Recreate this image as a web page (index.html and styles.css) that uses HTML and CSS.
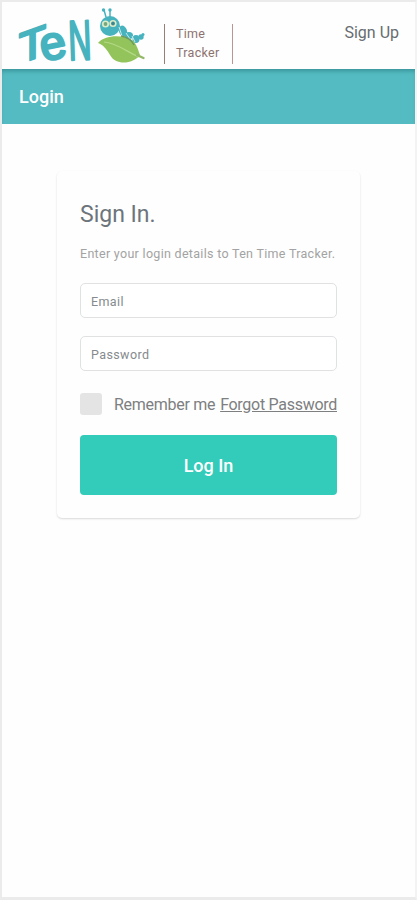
FILE: index.html
```html
<!DOCTYPE html>
<html lang="en">
<head>
    <meta charset="UTF-8">
    <meta name="viewport" content="width=device-width, initial-scale=1.0">
    <title>Login - Ten Time Tracker</title>
    <link rel="stylesheet" href="styles.css">
</head>
<body>
    <div class="page">
        <header class="header">
            <svg class="logo" width="130" height="60" viewBox="0 0 130 60" role="img" aria-label="Ten">
                <g class="logo-text">
                    <text transform="translate(0 53) skewY(-20)" font-size="43" textLength="27" lengthAdjust="spacingAndGlyphs" y="5">T</text>
                    <text transform="translate(24 55.500) rotate(-12)" font-size="47" textLength="26" lengthAdjust="spacingAndGlyphs">e</text>
                    <text transform="translate(50 54) rotate(-2)" font-size="56" textLength="23" lengthAdjust="spacingAndGlyphs">N</text>
                </g>
                <!-- caterpillar -->
                <g fill="#46b3bf">
                    <path d="M87 11 L85 4 M91 11 L91 4" stroke="#46b3bf" stroke-width="1.5" fill="none"/>
                    <circle cx="84.500" cy="4" r="1.700"/>
                    <circle cx="91" cy="4" r="1.700"/>
                    <circle cx="91" cy="20" r="10"/>
                    <ellipse cx="104" cy="25" rx="4" ry="5.500" transform="rotate(-18 104 25)"/>
                    <ellipse cx="110" cy="29.500" rx="4" ry="3.500"/>
                    <ellipse cx="117" cy="33" rx="3.500" ry="4"/>
                    <circle cx="122" cy="31" r="2.700"/>
                    <circle cx="124" cy="28.500" r="1.500"/>
                </g>
                <path d="M100 21 L103 30 M107 27 L111 33 M113 30 L116 36" stroke="#c9eaec" stroke-width="1" fill="none"/>
                <circle cx="86.500" cy="18" r="3.600" fill="#dcebc8"/>
                <circle cx="94" cy="17.500" r="3.600" fill="#dcebc8"/>
                <circle cx="86.500" cy="18" r="1.900" fill="#76a77e"/>
                <circle cx="94" cy="17.500" r="1.900" fill="#3b8790"/>
                <!-- leaf -->
                <path d="M79 37 C85 29 103 28 113 34 C118 38 119 44 121 49 C114 58 97 60 91 49 C87 42 84 39 79 37Z" fill="#93c45c"/>
                <path d="M85 36 C98 37 108 46 120 51" stroke="#b5d985" stroke-width="1.200" fill="none"/>
                <path d="M102 30 Q112 32 115 39" stroke="#6b9a62" stroke-width="1.500" fill="none"/>
                <path d="M118 49 L124.500 52" stroke="#93b967" stroke-width="2.300" stroke-linecap="round"/>
            </svg>
            <div class="brand-name">Time<br>Tracker</div>
            <a class="sign-up" href="#">Sign Up</a>
        </header>

        <div class="title-bar">Login</div>

        <form class="card">
            <h1>Sign In.</h1>
            <p class="intro">Enter your login details to Ten Time Tracker.</p>
            <input class="field" type="email" placeholder="Email">
            <input class="field" type="password" placeholder="Password">
            <div class="options">
                <input class="checkbox" type="checkbox" id="remember">
                <label for="remember">Remember me</label>
                <a class="forgot" href="#">Forgot Password</a>
            </div>
            <button class="login-button" type="button">Log In</button>
        </form>
    </div>
</body>
</html>
```

FILE: styles.css
```css
* {
    box-sizing: border-box;
}

body {
    margin: 0;
    background: #fefefe;
    font-family: Roboto, Arial, sans-serif;
    color: #707477;
}

.page {
    height: 900px;
    border: 2px solid #ebebeb;
    border-right-color: #f3f3f3;
    border-bottom-width: 3px;
}

.header {
    display: flex;
    align-items: flex-start;
    height: 67px;
    padding: 4px 16px 0 17px;
}

.logo {
    flex: none;
    overflow: visible;
}

.logo-text {
    fill: #46b3bf;
    stroke: #46b3bf;
    stroke-width: 2.5;
    stroke-linejoin: round;
    font-family: "Liberation Sans", Arial, sans-serif;
}

.brand-name {
    width: 69px;
    height: 40px;
    margin: 18px 0 0 15px;
    padding-left: 11px;
    border-left: 1px solid #9b7d78;
    border-right: 1px solid #b99691;
    font-size: 12.5px;
    line-height: 19px;
    letter-spacing: 0.3px;
    color: #8d7370;
}

.sign-up {
    margin: 17px 0 0 auto;
    font-size: 16px;
    line-height: 20px;
    color: #666c70;
    text-decoration: none;
}

.title-bar {
    height: 55px;
    padding-left: 17px;
    background: #54bbc2;
    box-shadow: inset 0 4px 4px -2px rgba(0, 70, 75, 0.35);
    color: white;
    font-size: 18px;
    font-weight: 500;
    line-height: 56px;
}

.card {
    width: 303px;
    height: 347px;
    margin: 47px 0 0 55px;
    padding: 30px 23px 0;
    border-radius: 5px;
    box-shadow: 0 1px 2px rgba(0, 0, 0, 0.15);
}

h1 {
    margin: 0;
    font-size: 23px;
    font-weight: 400;
    line-height: 28px;
    color: #6c757b;
}

.intro {
    margin: 16px 0 20px;
    font-size: 12.5px;
    line-height: 18px;
    letter-spacing: 0.3px;
    white-space: nowrap;
    color: #a3a3a3;
}

.field {
    display: block;
    width: 257px;
    height: 35px;
    margin: 0 0 18px;
    padding: 1px 10px 0;
    border: 1px solid #dfe1e3;
    border-radius: 5px;
    background: white;
    font-family: inherit;
    font-size: 12.5px;
    letter-spacing: 0.4px;
}

.field::placeholder {
    color: #858a8d;
}

.options {
    display: flex;
    align-items: center;
    height: 22px;
    margin-top: 22px;
    font-size: 16px;
    letter-spacing: -0.28px;
    white-space: nowrap;
    color: #7d7f81;
}

.checkbox {
    appearance: none;
    flex: none;
    width: 22px;
    height: 22px;
    margin: 0 12px 0 0;
    border-radius: 3px;
    background: #e4e4e4;
}

.forgot {
    margin-left: auto;
    color: inherit;
}

.login-button {
    display: block;
    width: 257px;
    height: 60px;
    margin-top: 20px;
    padding: 0;
    border: 0;
    border-radius: 4px;
    background: #33cbba;
    color: white;
    font-family: inherit;
    font-size: 18px;
    font-weight: 500;
}
```
